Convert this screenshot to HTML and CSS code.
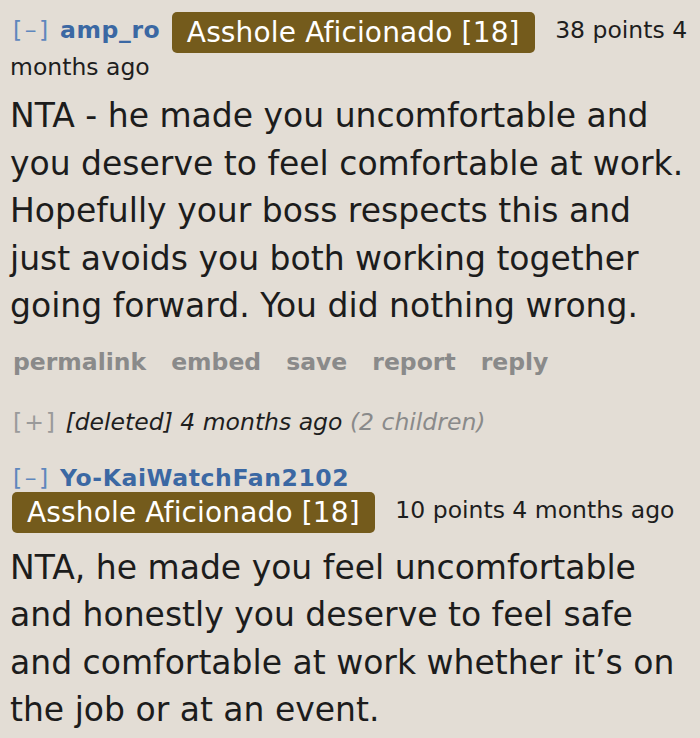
FILE: index.html
```html
<!DOCTYPE html>
<html lang="en">
<head>
<meta charset="utf-8">
<title>Comments</title>
<link rel="stylesheet" href="styles.css">
</head>
<body>
<div class="page">
  <div class="comment">
    <p class="tagline"><span class="expand">[–]</span> <span class="author">amp_ro</span> <span class="flair">Asshole Aficionado [18]</span> <span class="meta">38 points 4<br>months ago</span></p>
    <div class="md">NTA - he made you uncomfortable and<br>you deserve to feel comfortable at work.<br>Hopefully your boss respects this and<br>just avoids you both working together<br>going forward. You did nothing wrong.</div>
    <ul class="buttons">
      <li>permalink</li>
      <li>embed</li>
      <li>save</li>
      <li>report</li>
      <li>reply</li>
    </ul>
    <p class="collapsed"><span class="expand-gray">[+]</span> <em class="dark">[deleted]</em> <em class="dark">4 months ago</em> <em class="gray">(2 children)</em></p>
  </div>
  <div class="comment second">
    <p class="tagline"><span class="expand">[–]</span> <span class="author">Yo-KaiWatchFan2102</span> <span class="flair">Asshole Aficionado [18]</span> <span class="meta">10 points 4 months ago</span></p>
    <div class="md">NTA, he made you feel uncomfortable<br>and honestly you deserve to feel safe<br>and comfortable at work whether it’s on<br>the job or at an event.</div>
  </div>
</div>
</body>
</html>
```

FILE: styles.css
```css
html, body {
  margin: 0;
  padding: 0;
  background: #e3ddd5;
}

.page {
  min-height: 738px;
  padding: 12px 0 0 10px;
  box-sizing: border-box;
  font-family: "DejaVu Sans", Verdana, sans-serif;
  color: #1e1e1e;
  overflow: hidden;
}

.comment {
  display: flex;
  flex-direction: column;
  align-items: flex-start;
}

.comment.second {
  margin-top: 28px;
}

.tagline {
  margin: 0;
  font-size: 23.5px;
  line-height: 28px;
  white-space: normal;
}

.expand {
  color: #5f87bd;
  letter-spacing: 2.5px;
  margin-left: 3px;
  margin-right: 2px;
}

.author {
  color: #3b68a3;
  font-weight: bold;
  letter-spacing: 0.6px;
}

.flair {
  display: inline-block;
  font-size: 28px;
  line-height: 33px;
  padding: 4px 15px;
  margin: 0 13px 0 4px;
  background: #745b1c;
  color: #ffffff;
  border-radius: 5px;
  vertical-align: -4px;
  letter-spacing: 0.15px;
}

.second .flair {
  margin-left: 2px;
}

.meta {
  color: #1e1e1e;
}

.md {
  margin-top: 11px;
  font-size: 33px;
  line-height: 47.5px;
  color: #1c1c1c;
  white-space: nowrap;
}

.buttons {
  list-style: none;
  margin: 18px 0 0 0;
  padding: 0 0 0 3px;
  display: flex;
  gap: 25px;
  font-size: 23.5px;
  line-height: 28px;
  font-weight: bold;
  color: #8a8a8a;
}

.collapsed {
  margin: 32px 0 0 0;
  padding-left: 3px;
  font-size: 23.5px;
  line-height: 28px;
}

.expand-gray {
  color: #9a9a9a;
  letter-spacing: 2px;
  margin-right: 1px;
}

.dark {
  color: #1e1e1e;
  font-style: italic;
}

.gray {
  color: #8a8a8a;
  font-style: italic;
}
```
